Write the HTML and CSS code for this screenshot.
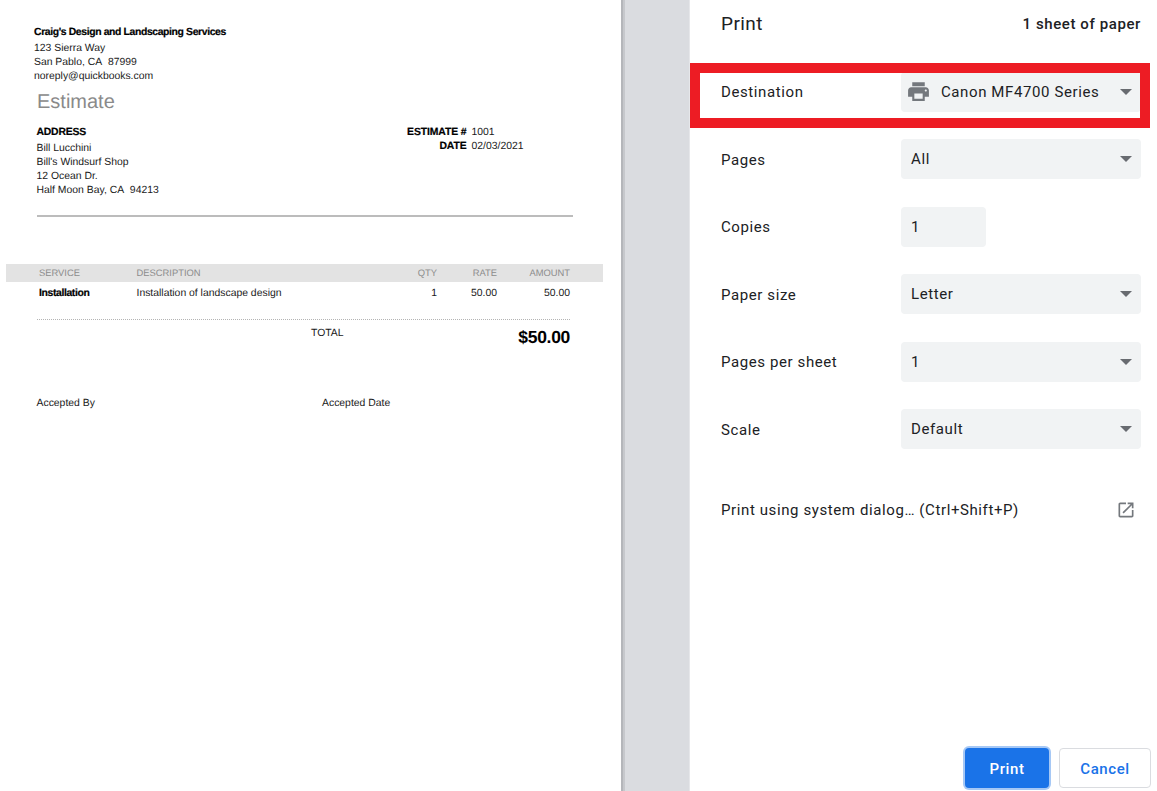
FILE: index.html
```html
<!DOCTYPE html>
<html lang="en">
<head>
<meta charset="utf-8">
<title>Print</title>
<link rel="stylesheet" href="styles.css">
</head>
<body>
<div class="app">
  <main class="preview">
    <section class="company">
      <div class="strong tight">Craig's Design and Landscaping Services</div>
      <div class="line first">123 Sierra Way</div>
      <div class="line">San Pablo, CA&nbsp; 87999</div>
      <div class="line">noreply@quickbooks.com</div>
    </section>
    <h1 class="doc-title">Estimate</h1>
    <section class="info">
      <div class="address">
        <div class="strong">ADDRESS</div>
        <div class="line first">Bill Lucchini</div>
        <div class="line">Bill's Windsurf Shop</div>
        <div class="line">12 Ocean Dr.</div>
        <div class="line">Half Moon Bay, CA&nbsp; 94213</div>
      </div>
      <dl class="meta">
        <dt>ESTIMATE #</dt><dd>1001</dd>
        <dt>DATE</dt><dd>02/03/2021</dd>
      </dl>
    </section>
    <hr class="rule">
    <div class="items head">
      <span>SERVICE</span><span>DESCRIPTION</span><span class="num">QTY</span><span class="num">RATE</span><span class="num">AMOUNT</span>
    </div>
    <div class="items row">
      <span class="strong tight">Installation</span><span>Installation of landscape design</span><span class="num">1</span><span class="num">50.00</span><span class="num">50.00</span>
    </div>
    <div class="total">
      <span class="total-label">TOTAL</span><span class="total-value">$50.00</span>
    </div>
    <div class="accept">
      <span class="accept-by">Accepted By</span><span>Accepted Date</span>
    </div>
  </main>
  <div class="gutter"></div>
  <aside class="sidebar">
    <header class="side-head">
      <h2 class="side-title">Print</h2>
      <span class="sheets">1 sheet of paper</span>
    </header>
    <div class="settings">
      <div class="setting">
        <span class="label">Destination</span>
        <div class="select dest">
          <svg class="printer" viewBox="0 0 24 24"><path d="M19 8H5c-1.66 0-3 1.34-3 3v6h4v4h12v-4h4v-6c0-1.66-1.34-3-3-3zm-3 11H8v-5h8v5zm3-7c-.55 0-1-.45-1-1s.45-1 1-1 1 .45 1 1-.45 1-1 1zm-1-9H6v4h12V3z"/></svg>
          <span class="value">Canon MF4700 Series</span>
          <i class="arrow"></i>
        </div>
      </div>
      <div class="setting"><span class="label">Pages</span><div class="select"><span class="value">All</span><i class="arrow"></i></div></div>
      <div class="setting"><span class="label">Copies</span><div class="select copies"><span class="value">1</span></div></div>
      <div class="setting"><span class="label">Paper size</span><div class="select"><span class="value">Letter</span><i class="arrow"></i></div></div>
      <div class="setting"><span class="label">Pages per sheet</span><div class="select"><span class="value">1</span><i class="arrow"></i></div></div>
      <div class="setting"><span class="label">Scale</span><div class="select"><span class="value">Default</span><i class="arrow"></i></div></div>
    </div>
    <div class="system">
      <span class="system-label">Print using system dialog… (Ctrl+Shift+P)</span>
      <svg class="launch" viewBox="0 0 24 24"><path d="M19 19H5V5h7V3H5c-1.11 0-2 .9-2 2v14c0 1.1.89 2 2 2h14c1.1 0 2-.9 2-2v-7h-2v7zM14 3v2h3.59l-9.83 9.83 1.41 1.41L19 6.41V10h2V3h-7z"/></svg>
    </div>
    <footer class="actions">
      <button class="btn primary">Print</button>
      <button class="btn secondary">Cancel</button>
    </footer>
    <div class="highlight"></div>
  </aside>
</div>
</body>
</html>
```

FILE: styles.css
```css
* { box-sizing: border-box; }
html, body { margin: 0; height: 100%; overflow: hidden; background: #fff; }
.app { display: flex; height: 791px; width: 1157px; }

/* Paper preview */
.preview {
  width: 621px;
  flex: none;
  background: #fff;
  padding-top: 26px;
  font: 10.4px/14px "Liberation Sans", Arial, sans-serif;
  text-rendering: geometricPrecision;
  color: #1a1a1a;
}
.strong { font-weight: 700; color: #000; letter-spacing: -0.2px; -webkit-text-stroke: 0.2px #000; }
.strong.tight { letter-spacing: -0.37px; }
.line.first { margin-top: 2px; }
.company { padding-left: 34px; }
.doc-title {
  margin: 5px 0 0 37px;
  font-weight: 400;
  font-size: 20px;
  line-height: 26px;
  color: #8a8a8a;
}
.info {
  display: flex;
  justify-content: space-between;
  align-items: flex-start;
  margin: 11px 0 0 36.5px;
  width: 486px;
}
.meta {
  margin: 0;
  display: grid;
  grid-template-columns: 61px auto;
  column-gap: 5px;
  width: 117px;
}
.meta dt { font-weight: 700; color: #000; text-align: right; letter-spacing: -0.1px; -webkit-text-stroke: 0.2px #000; white-space: nowrap; }
.meta dd { margin: 0; }
.rule {
  margin: 17px 0 0 37px;
  width: 536px;
  height: 2px;
  border: 0;
  background: #bcbcbc;
}
.items {
  display: grid;
  grid-template-columns: 97.5px 1fr 60px 60px 73px;
  margin-left: 6px;
  width: 597px;
  padding: 0 33px;
  align-items: center;
}
.num { text-align: right; }
.head {
  margin-top: 47px;
  height: 18px;
  background: #e3e3e3;
  color: #8c8c8c;
  font-size: 9.4px;
}
.row { height: 20px; padding-top: 3px; }
.total {
  display: flex;
  justify-content: space-between;
  align-items: flex-start;
  margin: 17px 0 0 37px;
  width: 533px;
  border-top: 1px dotted #b4b4b4;
  padding-left: 274px;
}
.total-label { margin-top: 7px; }
.total-value { font-weight: 700; font-size: 17.5px; line-height: 22px; margin-top: 6px; color: #000; letter-spacing: -0.3px; }
.accept { display: flex; margin: 49px 0 0 36.5px; }
.accept-by { width: 285.5px; }

/* Gutter */
.gutter {
  width: 69px;
  flex: none;
  background: linear-gradient(90deg, #b4b6ba 0, #b4b6ba 2px, #c6c8cc 2px, #c6c8cc 4px, #dadce0 4px, #dadce0 68px, #e6e7ea 68px);
}

/* Settings sidebar */
.sidebar {
  position: relative;
  flex: 1;
  display: flex;
  flex-direction: column;
  background: #fff;
  padding: 0 16px 0 31px;
  font-family: Roboto, "Liberation Sans", Arial, sans-serif;
  color: #202124;
  font-size: 15px;
  letter-spacing: 0.6px;
}
.side-head {
  height: 71.75px;
  flex: none;
  display: flex;
  justify-content: space-between;
  align-items: flex-start;
  padding-top: 11px;
  width: 420px;
}
.side-title { margin: 0; font-size: 19px; font-weight: 400; line-height: 25px; letter-spacing: 0.4px; }
.sheets { font-weight: 500; line-height: 26px; }
.settings { display: flex; flex-direction: column; gap: 27.5px; width: 420px; }
.setting { display: flex; align-items: center; justify-content: space-between; height: 40px; }
.label { padding-top: 1px; }
.select {
  position: relative;
  width: 240px;
  height: 40px;
  border-radius: 4px;
  background: #f1f3f4;
  display: flex;
  align-items: center;
  padding-left: 10px;
}
.select.copies { width: 85px; margin-right: 155px; }
.dest { padding-left: 5px; }
.printer { width: 25px; height: 25px; fill: #74787d; flex: none; margin-right: 10px; }
.value { line-height: 20px; }
.arrow {
  position: absolute;
  right: 9px;
  top: 17px;
  width: 0;
  height: 0;
  border-left: 6.5px solid transparent;
  border-right: 6.5px solid transparent;
  border-top: 6.5px solid #686b70;
}
.system {
  margin-top: 47.75px;
  height: 26px;
  width: 420px;
  display: flex;
  align-items: center;
  justify-content: space-between;
}
.launch { width: 20px; height: 20px; fill: #74787d; margin-right: 5px; }
.actions {
  margin-top: auto;
  display: flex;
  justify-content: flex-end;
  gap: 10px;
  margin-right: -10px;
  padding-bottom: 3px;
}
.btn {
  height: 40px;
  border-radius: 4px;
  font: 500 15px Roboto, "Liberation Sans", Arial, sans-serif;
  letter-spacing: 0.6px;
  padding: 1px 0 0;
}
.primary {
  width: 84px;
  background: #1a73e8;
  color: #fff;
  border: 0;
  box-shadow: 0 0 0 2px #a6c8f5;
}
.secondary {
  width: 92px;
  background: #fff;
  color: #1a73e8;
  border: 1px solid #dadce0;
}
.highlight {
  position: absolute;
  left: 0;
  top: 63px;
  width: 460px;
  height: 65px;
  border: 10px solid #ed1c24;
}
```
